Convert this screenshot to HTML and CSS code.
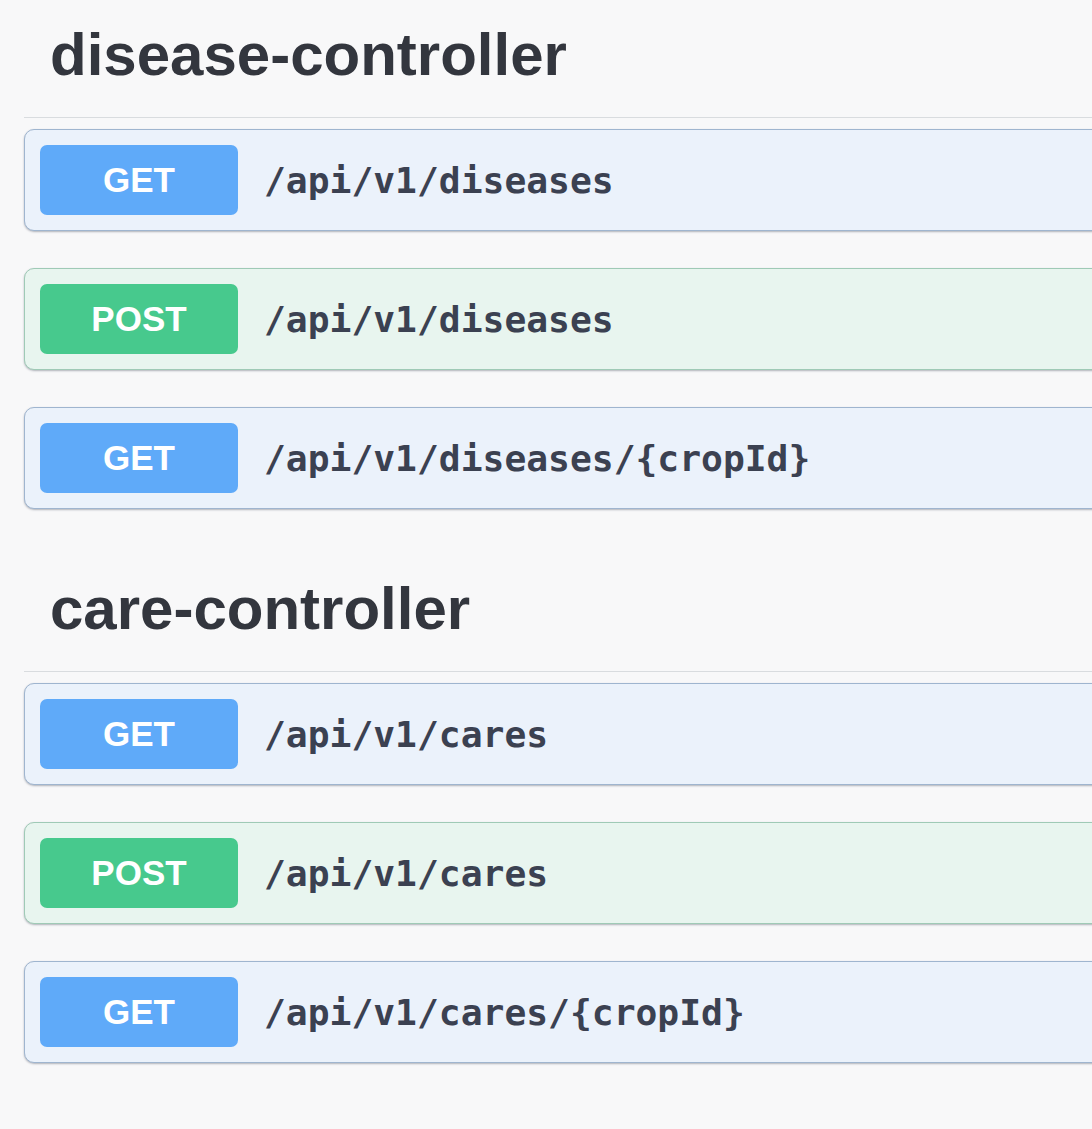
FILE: index.html
```html
<!DOCTYPE html>
<html>
<head>
<meta charset="utf-8">
<link rel="stylesheet" href="styles.css">
</head>
<body>
<div class="page">
  <section class="tag-section">
    <h3 class="tag">disease-controller</h3>
    <div class="opblock get"><span class="method">GET</span><span class="path">/api/v1/diseases</span></div>
    <div class="opblock post"><span class="method">POST</span><span class="path">/api/v1/diseases</span></div>
    <div class="opblock get"><span class="method">GET</span><span class="path">/api/v1/diseases/{cropId}</span></div>
  </section>
  <section class="tag-section second">
    <h3 class="tag">care-controller</h3>
    <div class="opblock get"><span class="method">GET</span><span class="path">/api/v1/cares</span></div>
    <div class="opblock post"><span class="method">POST</span><span class="path">/api/v1/cares</span></div>
    <div class="opblock get"><span class="method">GET</span><span class="path">/api/v1/cares/{cropId}</span></div>
  </section>
</div>
</body>
</html>
```

FILE: styles.css
```css
html, body {
  margin: 0;
  padding: 0;
  background: #f8f8f9;
  overflow: hidden;
}
.page {
  padding-left: 24px;
  margin-right: -40px;
}
.tag-section.second {
  padding-top: 8px;
}
.tag {
  margin: 0;
  font-family: "Liberation Sans", Arial, sans-serif;
  font-weight: bold;
  font-size: 60px;
  line-height: 59px;
  color: #33363e;
  padding: 25px 0 33px 26px;
  border-bottom: 1px solid #d9dcdf;
  margin-bottom: 11px;
}
.opblock {
  display: flex;
  align-items: center;
  height: 70px;
  padding: 15px 14px 15px 14px;
  border-radius: 10px;
  margin-bottom: 37px;
  box-shadow: 0 1px 2px rgba(40, 50, 70, 0.35);
}
.opblock.get {
  background: #ebf2fb;
  border: 1px solid #9fb5cf;
}
.opblock.post {
  background: #e8f5ef;
  border: 1px solid #9fcab6;
}
.method {
  width: 198px;
  height: 70px;
  border-radius: 7px;
  display: flex;
  align-items: center;
  justify-content: center;
  color: #fff;
  font-family: "Liberation Sans", Arial, sans-serif;
  font-weight: bold;
  font-size: 35px;
  flex: none;
  margin-left: 1px;
}
.get .method { background: #5faaf9; }
.post .method { background: #47c98d; }
.path {
  margin-left: 26px;
  font-family: "DejaVu Sans Mono", monospace;
  font-weight: bold;
  font-size: 36.3px;
  color: #3b4151;
}
```
